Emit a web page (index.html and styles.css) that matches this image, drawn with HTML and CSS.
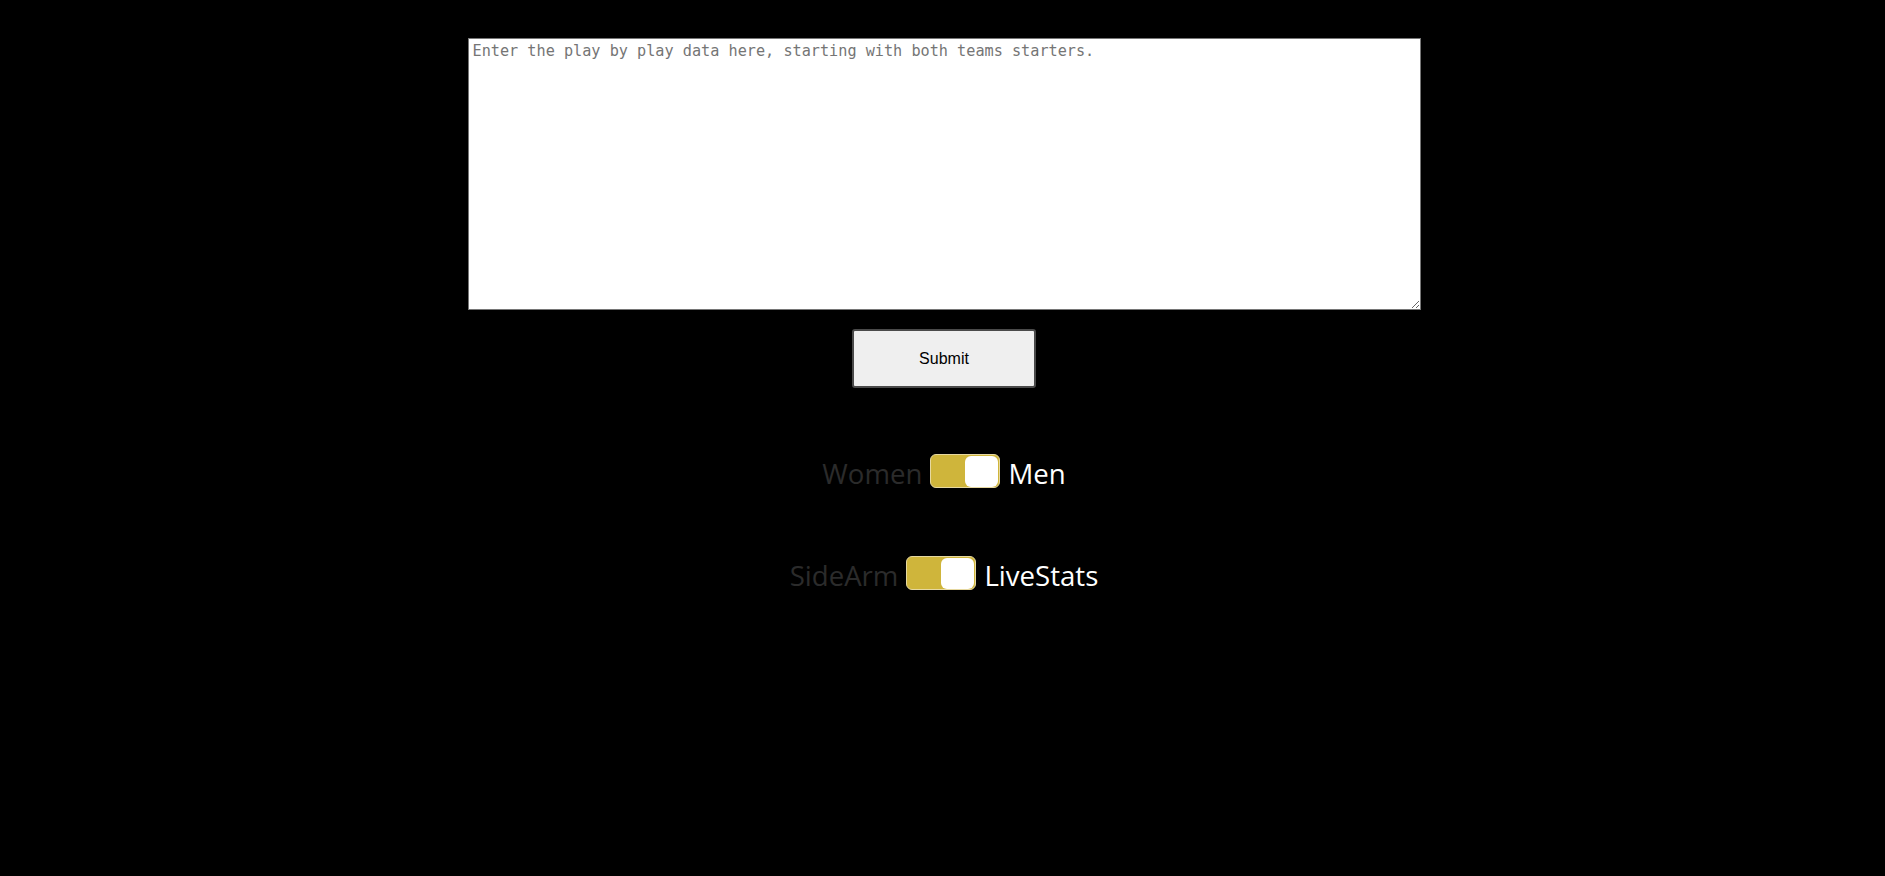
FILE: index.html
```html
<!DOCTYPE html>
<html>
<head>
<meta charset="utf-8">
<link rel="stylesheet" href="styles.css">
</head>
<body>
<main class="page">
  <textarea class="pbp" placeholder="Enter the play by play data here, starting with both teams starters."></textarea>
  <button class="submit">Submit</button>
  <div class="switch-row row-gender">
    <span class="lbl off">Women</span>
    <span class="toggle"><span class="knob"></span></span>
    <span class="lbl on">Men</span>
  </div>
  <div class="switch-row row-source">
    <span class="lbl off">SideArm</span>
    <span class="toggle"><span class="knob"></span></span>
    <span class="lbl on">LiveStats</span>
  </div>
</main>
</body>
</html>
```
FILE: styles.css
```css
html, body {
  margin: 0;
  padding: 0;
  background: #000;
  height: 100%;
}
.page {
  display: flex;
  flex-direction: column;
  align-items: center;
  padding-top: 38px;
  padding-left: 3px;
}
.pbp {
  box-sizing: border-box;
  width: 953px;
  height: 272px;
  margin: 0;
  padding: 3px 4px;
  border: 1px solid #767676;
  background: #fff;
  font-family: "DejaVu Sans Mono", "Liberation Mono", monospace;
  font-size: 15.2px;
  line-height: 18px;
  resize: both;
}
.pbp::placeholder {
  color: #757575;
}
.submit {
  margin-top: 19px;
  width: 184px;
  height: 59px;
  background: #efefef;
  border: 2px solid #4a4a4a;
  border-radius: 3px;
  font-family: "Liberation Sans", Arial, sans-serif;
  font-size: 16px;
  color: #000;
}
.switch-row {
  display: flex;
  align-items: center;
  gap: 8px;
  font-family: "Open Sans", sans-serif;
  font-size: 27.6px;
  line-height: 36px;
}
.lbl { padding-top: 4px; }
.row-gender { margin-top: 63px; }
.row-source { margin-top: 62px; }
.lbl.off { color: #2b2b2b; }
.lbl.on { color: #fff; }
.toggle {
  box-sizing: border-box;
  width: 70px;
  height: 34px;
  border-radius: 6px;
  background: #cfb53b;
  border: 1px solid #e6d8a0;
  display: flex;
  justify-content: flex-end;
  align-items: center;
  padding-right: 1px;
}
.knob {
  width: 33px;
  height: 31px;
  background: #fff;
  border-radius: 6px;
}
```
